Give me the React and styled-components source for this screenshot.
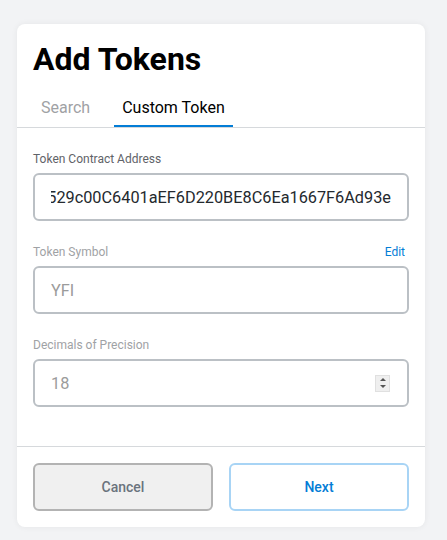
import React from "react";
import styled, { createGlobalStyle } from "styled-components";

const Global = createGlobalStyle`
  html, body { margin: 0; padding: 0; background: #f2f3f5; }
  body { font-family: Roboto, "Liberation Sans", Arial, sans-serif; }
  * { box-sizing: border-box; }
`;

const Page = styled.div`
  padding: 24px 22px 14px 17px;
`;

const Card = styled.div`
  background: #ffffff;
  border-radius: 8px;
  box-shadow: 0 0 6px rgba(0, 0, 0, 0.06);
  display: flex;
  flex-direction: column;
`;

const Title = styled.h1`
  margin: 0;
  padding: 15px 16px 0;
  font-size: 32px;
  line-height: 40px;
  font-weight: 700;
  color: #000;
`;

const TabList = styled.div`
  display: flex;
  gap: 16px;
  padding: 8px 16px 0;
  border-bottom: 1px solid #d6d9dc;
`;

const Tab = styled.div`
  padding: 11px 8px 7px;
  font-size: 16px;
  line-height: 20px;
  color: ${(p) => (p.$active ? "#000000" : "#9fa2a5")};
  border-bottom: 2px solid ${(p) => (p.$active ? "#037dd6" : "transparent")};
`;

const Body = styled.div`
  display: flex;
  flex-direction: column;
  gap: 23px;
  padding: 23px 16px 39px;
`;

const Field = styled.div`
  display: flex;
  flex-direction: column;
`;

const LabelRow = styled.div`
  display: flex;
  justify-content: space-between;
  align-items: center;
  margin-bottom: 6px;
`;

const Label = styled.span`
  font-size: 12px;
  line-height: 16px;
  color: ${(p) => (p.$disabled ? "#9fa2a5" : "#5f6368")};
`;

const EditLink = styled.span`
  font-size: 12px;
  line-height: 16px;
  color: #037dd6;
  padding-right: 4px;
`;

const InputBox = styled.div`
  height: 48px;
  border: 2px solid #bbc0c5;
  border-radius: 6px;
  display: flex;
  align-items: center;
  padding: 0 16px;
  font-size: 16.3px;
  color: ${(p) => (p.$disabled ? "#9b9b9b" : "#24292e")};
  white-space: nowrap;
`;

const ClipText = styled.div`
  flex: 1;
  min-width: 0;
  overflow: hidden;
  display: flex;
  justify-content: ${(p) => (p.$end ? "flex-end" : "flex-start")};
`;

const Spinner = styled.div`
  width: 15px;
  height: 17px;
  background: #efefef;
  border: 1px solid #e0e0e0;
  display: flex;
  flex-direction: column;
  align-items: center;
  justify-content: space-around;
  margin-right: 1px;
`;

const Arrow = styled.div`
  width: 0;
  height: 0;
  border-left: 3px solid transparent;
  border-right: 3px solid transparent;
  ${(p) => (p.$up ? "border-bottom: 3px solid #555;" : "border-top: 3px solid #555;")}
`;

const Footer = styled.div`
  display: flex;
  gap: 16px;
  padding: 16px;
  border-top: 1px solid #d6d9dc;
`;

const Button = styled.button`
  flex: 1;
  height: 48px;
  border-radius: 6px;
  font-family: Roboto, "Liberation Sans", Arial, sans-serif;
  font-size: 14px;
  font-weight: 500;
  border: 2px solid ${(p) => (p.$primary ? "#a8d4f5" : "#b3b3b3")};
  background: ${(p) => (p.$primary ? "#ffffff" : "#f0f0f0")};
  color: ${(p) => (p.$primary ? "#037dd6" : "#6a737d")};
`;

export default function App() {
  return (
    <>
      <Global />
      <Page>
        <Card>
          <Title>Add Tokens</Title>
          <TabList>
            <Tab>Search</Tab>
            <Tab $active>Custom Token</Tab>
          </TabList>
          <Body>
            <Field>
              <LabelRow>
                <Label>Token Contract Address</Label>
              </LabelRow>
              <InputBox>
                <ClipText $end>0x0bc529c00C6401aEF6D220BE8C6Ea1667F6Ad93e</ClipText>
              </InputBox>
            </Field>
            <Field>
              <LabelRow>
                <Label $disabled>Token Symbol</Label>
                <EditLink>Edit</EditLink>
              </LabelRow>
              <InputBox $disabled>
                <ClipText>YFI</ClipText>
              </InputBox>
            </Field>
            <Field>
              <LabelRow>
                <Label $disabled>Decimals of Precision</Label>
              </LabelRow>
              <InputBox $disabled>
                <ClipText>18</ClipText>
                <Spinner>
                  <Arrow $up />
                  <Arrow />
                </Spinner>
              </InputBox>
            </Field>
          </Body>
          <Footer>
            <Button>Cancel</Button>
            <Button $primary>Next</Button>
          </Footer>
        </Card>
      </Page>
    </>
  );
}
